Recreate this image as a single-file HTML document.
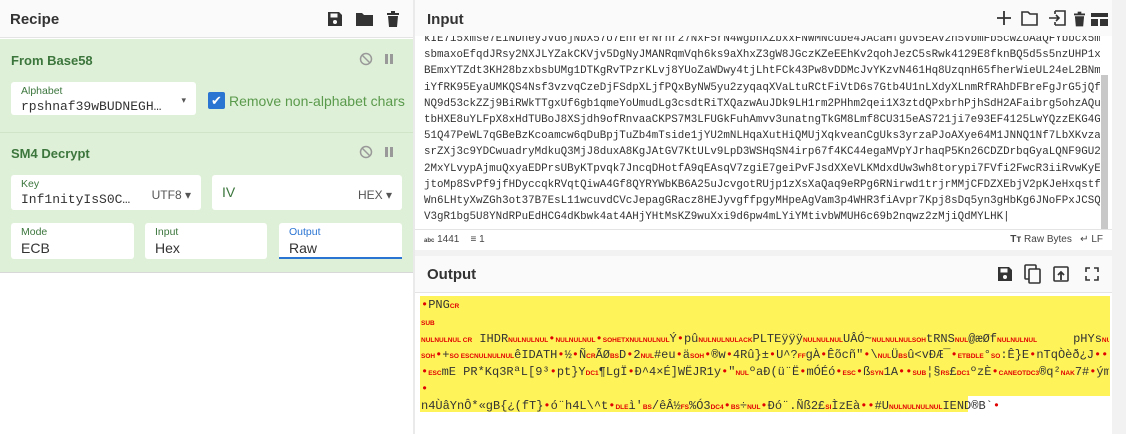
<!DOCTYPE html>
<html><head><meta charset="utf-8"><style>
*{box-sizing:border-box;margin:0;padding:0}
body{width:1126px;height:434px;overflow:hidden;background:#fff;font-family:"Liberation Sans",sans-serif;position:relative;color:#333}
.abs{position:absolute}
.h{font-weight:bold;font-size:15px;color:#333}
.green{background:#dff0d8}
.op{color:#3c763d;font-weight:bold;font-size:13px}
.box{position:absolute;background:#fff;border-radius:3px}
.lbl{position:absolute;left:10px;top:3px;font-size:10.5px;color:#3c763d}
.val{position:absolute;left:10px;top:17px;font-size:14px;color:#333}
.mono{font-family:"Liberation Mono",monospace}
.dd{position:absolute;right:10px;top:13px;font-size:12px;color:#555}
#inpw{position:absolute;left:424px;top:36px;width:676px;height:193px;overflow:hidden}
#inp{position:absolute;left:0;top:-5px;font-family:"Liberation Mono",monospace;font-size:10.85px;line-height:16.2px;color:#333;white-space:pre}
#out{position:absolute;left:421px;top:297px;width:688px;height:120px;overflow:hidden;font-family:"Liberation Mono",monospace;font-size:12px;color:#333;white-space:pre}
#out div{height:16.8px;line-height:16.8px;overflow:hidden}
#out i{font-style:normal;font-family:"Liberation Sans",sans-serif;font-size:6.5px;color:#e00000;font-weight:bold;line-height:1}
#out b{color:#e00000;font-weight:normal}
svg{position:absolute}
</style></head><body>
<div class="abs" style="left:0;top:0;width:414px;height:38px;background:#fafafa;border-bottom:1px solid #e4e4e4"></div>
<div class="abs h" style="left:10px;top:11px">Recipe</div>
<svg style="left:327px;top:11px" width="16" height="16" viewBox="0 0 16 16"><path d="M1 1h11l3 3v11H1z" fill="#333"/><rect x="3.5" y="2.5" width="7" height="4" fill="#fafafa"/><circle cx="8" cy="11" r="2" fill="#fafafa"/></svg>
<svg style="left:356px;top:12px" width="17" height="14" viewBox="0 0 17 14"><path d="M0 1h6l2 2h9v11H0z" fill="#333"/></svg>
<svg style="left:387px;top:11px" width="12" height="16" viewBox="0 0 12 16"><rect x="0" y="2" width="12" height="2" fill="#333"/><rect x="4" y="0" width="4" height="2" fill="#333"/><path d="M1 5h10l-1 11H2z" fill="#333"/></svg>
<div class="abs green" style="left:0;top:39px;width:414px;height:233px"></div>
<div class="abs" style="left:0;top:132px;width:414px;height:1px;background:#d0e4c8"></div>
<div class="abs" style="left:0;top:272px;width:414px;height:1px;background:#d8d8d8"></div>
<div class="abs" style="left:413px;top:0;width:2px;height:434px;background:#eaeaea"></div>
<div class="abs op" style="left:11px;top:53px">From Base58</div>
<svg style="left:359px;top:52px" width="14" height="14" viewBox="0 0 14 14"><circle cx="7" cy="7" r="5.5" fill="none" stroke="#999" stroke-width="1.5"/><path d="M3 3l8 8" stroke="#999" stroke-width="1.5"/></svg>
<svg style="left:385px;top:54px" width="8" height="10"><rect x="0" width="3" height="10" fill="#999"/><rect x="5" width="3" height="10" fill="#999"/></svg>
<div class="box" style="left:11px;top:82px;width:185px;height:33px"><div class="lbl">Alphabet</div><div class="val mono" style="font-size:13px">rpshnaf39wBUDNEGH…</div><div class="dd" style="font-size:9px">▾</div></div>
<div class="abs" style="left:208px;top:92px;width:17px;height:17px;background:#2a74d2;border-radius:2px;color:#fff;font-size:13px;text-align:center;line-height:17px">✔</div>
<div class="abs" style="left:229px;top:93px;font-size:14px;color:#5a9a4c">Remove non-alphabet chars</div>
<div class="abs op" style="left:11px;top:146px">SM4 Decrypt</div>
<svg style="left:359px;top:145px" width="14" height="14" viewBox="0 0 14 14"><circle cx="7" cy="7" r="5.5" fill="none" stroke="#999" stroke-width="1.5"/><path d="M3 3l8 8" stroke="#999" stroke-width="1.5"/></svg>
<svg style="left:385px;top:147px" width="8" height="10"><rect x="0" width="3" height="10" fill="#999"/><rect x="5" width="3" height="10" fill="#999"/></svg>
<div class="box" style="left:11px;top:175px;width:190px;height:35px"><div class="lbl">Key</div><div class="val mono" style="font-size:13px">Inf1nityIsS0C…</div><div class="dd">UTF8 ▾</div></div>
<div class="box" style="left:212px;top:175px;width:190px;height:35px"><div class="val" style="top:9px;color:#3c763d">IV</div><div class="dd">HEX ▾</div></div>
<div class="box" style="left:11px;top:223px;width:123px;height:36px"><div class="lbl">Mode</div><div class="val">ECB</div></div>
<div class="box" style="left:145px;top:223px;width:122px;height:36px"><div class="lbl">Input</div><div class="val">Hex</div></div>
<div class="box" style="left:279px;top:223px;width:123px;height:36px;border-bottom:2px solid #2a74d2;border-radius:3px 3px 0 0"><div class="lbl" style="color:#2a74d2">Output</div><div class="val">Raw</div></div>
<div class="abs" style="left:415px;top:0;width:697px;height:36px;background:#fafafa"></div>
<div class="abs h" style="left:427px;top:11px">Input</div>
<svg style="left:997px;top:11px" width="14" height="14" viewBox="0 0 14 14"><path d="M7 0v14M0 7h14" stroke="#333" stroke-width="1.8"/></svg>
<svg style="left:1021px;top:11px" width="17" height="15" viewBox="0 0 17 15"><path d="M1 1h6l2 2h7v11H1z" fill="none" stroke="#333" stroke-width="1.6"/></svg>
<svg style="left:1048px;top:10px" width="18" height="16" viewBox="0 0 18 16"><path d="M7 1h10v14H7M7 4V1M7 12v3" fill="none" stroke="#333" stroke-width="1.6"/><path d="M1 8h10M8 5l3 3-3 3" fill="none" stroke="#333" stroke-width="1.6"/></svg>
<svg style="left:1074px;top:11px" width="11" height="16" viewBox="0 0 12 16"><rect x="0" y="2" width="12" height="2" fill="#333"/><rect x="4" y="0" width="4" height="2" fill="#333"/><path d="M1 5h10l-1 11H2z" fill="#333"/></svg>
<svg style="left:1091px;top:13px" width="17" height="13"><rect width="17" height="4" fill="#333"/><rect y="6" width="7" height="7" fill="#333"/><rect x="9" y="6" width="8" height="7" fill="#333"/></svg>
<div class="abs" style="left:1112px;top:0;width:14px;height:434px;background:#f2f2f2"></div>
<div class="abs" style="left:1101px;top:75px;width:7px;height:155px;background:#c8c8c8"></div>
<div id="inpw"><div id="inp">kIE7i5xmse7EiNDneyJVd6jNbX57o7EhrerNrhr27NxF5rN4wgbnXZbxxFNWMNcdbe4JAcaHfgbV5EAV2h5VbmFb5cwZoAaQFYbbcx5m
sbmaxoEfqdJRsy2NXJLYZakCKVjv5DgNyJMANRqmVqh6ks9aXhxZ3gW8JGczKZeEEhKv2qohJezC5sRwk4129E8fknBQ5d5s5nzUHP1x
BEmxYTZdt3KH28bzxbsbUMg1DTKgRvTPzrKLvj8YUoZaWDwy4tjLhtFCk43Pw8vDDMcJvYKzvN461Hq8UzqnH65fherWieUL24eL2BNm
iYfRK95EyaUMKQS4Nsf3vzvqCzeDjFSdpXLjfPQxByNW5yu2zyqaqXVaLtuRCtFiVtD6s7Gtb4U1nLXdyXLnmRfRAhDFBreFgJrG5jQf
NQ9d53ckZZj9BiRWkTTgxUf6gb1qmeYoUmudLg3csdtRiTXQazwAuJDk9LH1rm2PHhm2qei1X3ztdQPxbrhPjhSdH2AFaibrg5ohzAQu
tbHXE8uYLFpX8xHdTUBoJ8XSjdh9ofRnvaaCKPS7M3LFUGkFuhAmvv3unatngTkGM8Lmf8CU315eAS721ji7e93EF4125LwYQzzEKG4G
51Q47PeWL7qGBeBzKcoamcw6qDuBpjTuZb4mTside1jYU2mNLHqaXutHiQMUjXqkveanCgUks3yrzaPJoAXye64M1JNNQ1Nf7LbXKvza
srZXj3c9YDCwuadryMdkuQ3MjJ8duxA8KgJAtGV7KtULv9LpD3WSHqSN4irp67f4KC44egaMVpYJrhaqP5Kn26CDZDrbqGyaLQNF9GU2
2MxYLvypAjmuQxyaEDPrsUByKTpvqk7JncqDHotfA9qEAsqV7zgiE7geiPvFJsdXXeVLKMdxdUw3wh8torypi7FVfi2FwcR3iiRvwKyE
jtoMp8SvPf9jfHDyccqkRVqtQiwA4Gf8QYRYWbKB6A25uJcvgotRUjp1zXsXaQaq9eRPg6RNirwd1trjrMMjCFDZXEbjV2pKJeHxqstf
Wn6LHtyXwZGh3ot37B7EsL11wcuvdCVcJepagGRacz8HEJyvgffpgyMHpeAgVam3p4WHR3fiAvpr7Kpj8sDq5yn3gHbKg6JNoFPxJCSQ
V3gR1bg5U8YNdRPuEdHCG4dKbwk4at4AHjYHtMsKZ9wuXxi9d6pw4mLYiYMtivbWMUH6c69b2nqwz2zMjiQdMYLHK|</div></div>
<div class="abs" style="left:415px;top:229px;width:697px;height:19px;border-top:1px solid #e4e4e4;font-size:10px;color:#444">
<span class="abs" style="left:9px;top:4px"><span style="font-size:6px;font-weight:bold">abc</span> 1441 &nbsp;&nbsp; ≡ 1</span>
<span class="abs" style="right:9px;top:4px"><b>Tт</b> Raw Bytes &nbsp; ↵ LF</span></div>
<div class="abs" style="left:415px;top:250px;width:697px;height:6px;background:#f2f2f2"></div>
<div class="abs" style="left:415px;top:256px;width:697px;height:37px;background:#fafafa;border-bottom:1px solid #e4e4e4"></div>
<div class="abs h" style="left:427px;top:266px">Output</div>
<svg style="left:997px;top:266px" width="16" height="16" viewBox="0 0 16 16"><path d="M1 1h11l3 3v11H1z" fill="#333"/><rect x="3.5" y="2.5" width="7" height="4" fill="#fafafa"/><circle cx="8" cy="11" r="2" fill="#fafafa"/></svg>
<svg style="left:1024px;top:264px" width="18" height="20" viewBox="0 0 18 20"><rect x="1" y="1" width="11" height="14" rx="1" fill="none" stroke="#333" stroke-width="1.6"/><rect x="5" y="5" width="11" height="14" rx="1" fill="#fafafa" stroke="#333" stroke-width="1.6"/></svg>
<svg style="left:1053px;top:266px" width="16" height="16" viewBox="0 0 16 16"><rect x="1" y="1" width="14" height="14" rx="1" fill="none" stroke="#333" stroke-width="1.6"/><path d="M8 14V6M5 9l3-3 3 3" fill="none" stroke="#333" stroke-width="1.8"/></svg>
<svg style="left:1085px;top:267px" width="14" height="14" viewBox="0 0 14 14"><path d="M1 5V1h4M9 1h4v4M13 9v4H9M5 13H1V9" fill="none" stroke="#333" stroke-width="1.6"/></svg>
<div class="abs" style="left:420px;top:296px;width:690px;height:100px;background:#fff35a"></div>
<div class="abs" style="left:420px;top:396px;width:548px;height:16px;background:#fff35a"></div>
<div id="out"><div><b>•</b>PNG<i>CR</i></div><div><i>SUB</i></div><div><i>NULNULNUL CR</i> IHDR<i>NULNULNUL</i><b>•</b><i>NULNULNUL</i><b>•</b><i>SOHETXNULNULNUL</i>Ý<b>•</b>pû<i>NULNULNULACK</i>PLTEÿÿÿ<i>NULNULNUL</i>UÂÓ~<i>NULNULNULSOH</i>tRNS<i>NUL</i>@æØf<i>NULNULNUL</i>     pHYs<i>NULNUL SO</i>Ä<i>NULNUL SO</i>Ä</div><div><i>SOH</i><b>•</b>+<i>SO ESCNULNULNUL</i>êIDATH<b>•</b>½<b>•</b>Ñ<i>CR</i>ÃØ<i>BS</i>D<b>•</b>2<i>NUL</i>#eu<b>•</b>ä<i>SOH</i><b>•</b>®w<b>•</b>4Rû}±<b>•</b>U^?<i>FF</i>gÀ<b>•</b>Êõcñ"<b>•</b>\<i>NUL</i>Ü<i>BS</i>û&lt;vÐÆ¯<b>•</b><i>ETBDLE</i>°<i>SO</i>:Ê}E<b>•</b>nTqÒèð¿J<b>••</b>ö"ôÁ5<i>DC2</i>g</div><div><b>•</b><i>ESC</i>mE PR*Kq3RªL[9³<b>•</b>pt}Y<i>DC1</i>¶LgÏ<b>•</b>Ð^4×É]WËJR1y<b>•</b>"<i>NUL</i>ºaÐ(ü¨Ë<b>•</b>mÓÉó<b>•</b><i>ESC</i><b>•</b>ß<i>SYN</i>1A<b>••</b><i>SUB</i>¦§<i>RS</i>£<i>DC1</i>ºzÈ<b>•</b><i>CANEOTDC3</i>®q²<i>NAK</i>7#<b>•</b>ýmÎ.)7ª{%Ï<i>CAN</i></div><div><b>•</b></div><div>n4ÙâYnÔ*«gB{¿(fT}<b>•</b>ó¨h4L\^t<b>•</b><i>DLE</i>ì'<i>BS</i>/êÂ½<i>FS</i>%Ó3<i>DC4</i><b>•</b><i>BS</i>÷<i>NUL</i><b>•</b>Ðó¨.Ñß2£<i>SI</i>ÌzEà<b>••</b>#U<i>NULNULNULNUL</i>IEND®B`<b>•</b></div></div>
</body></html>
